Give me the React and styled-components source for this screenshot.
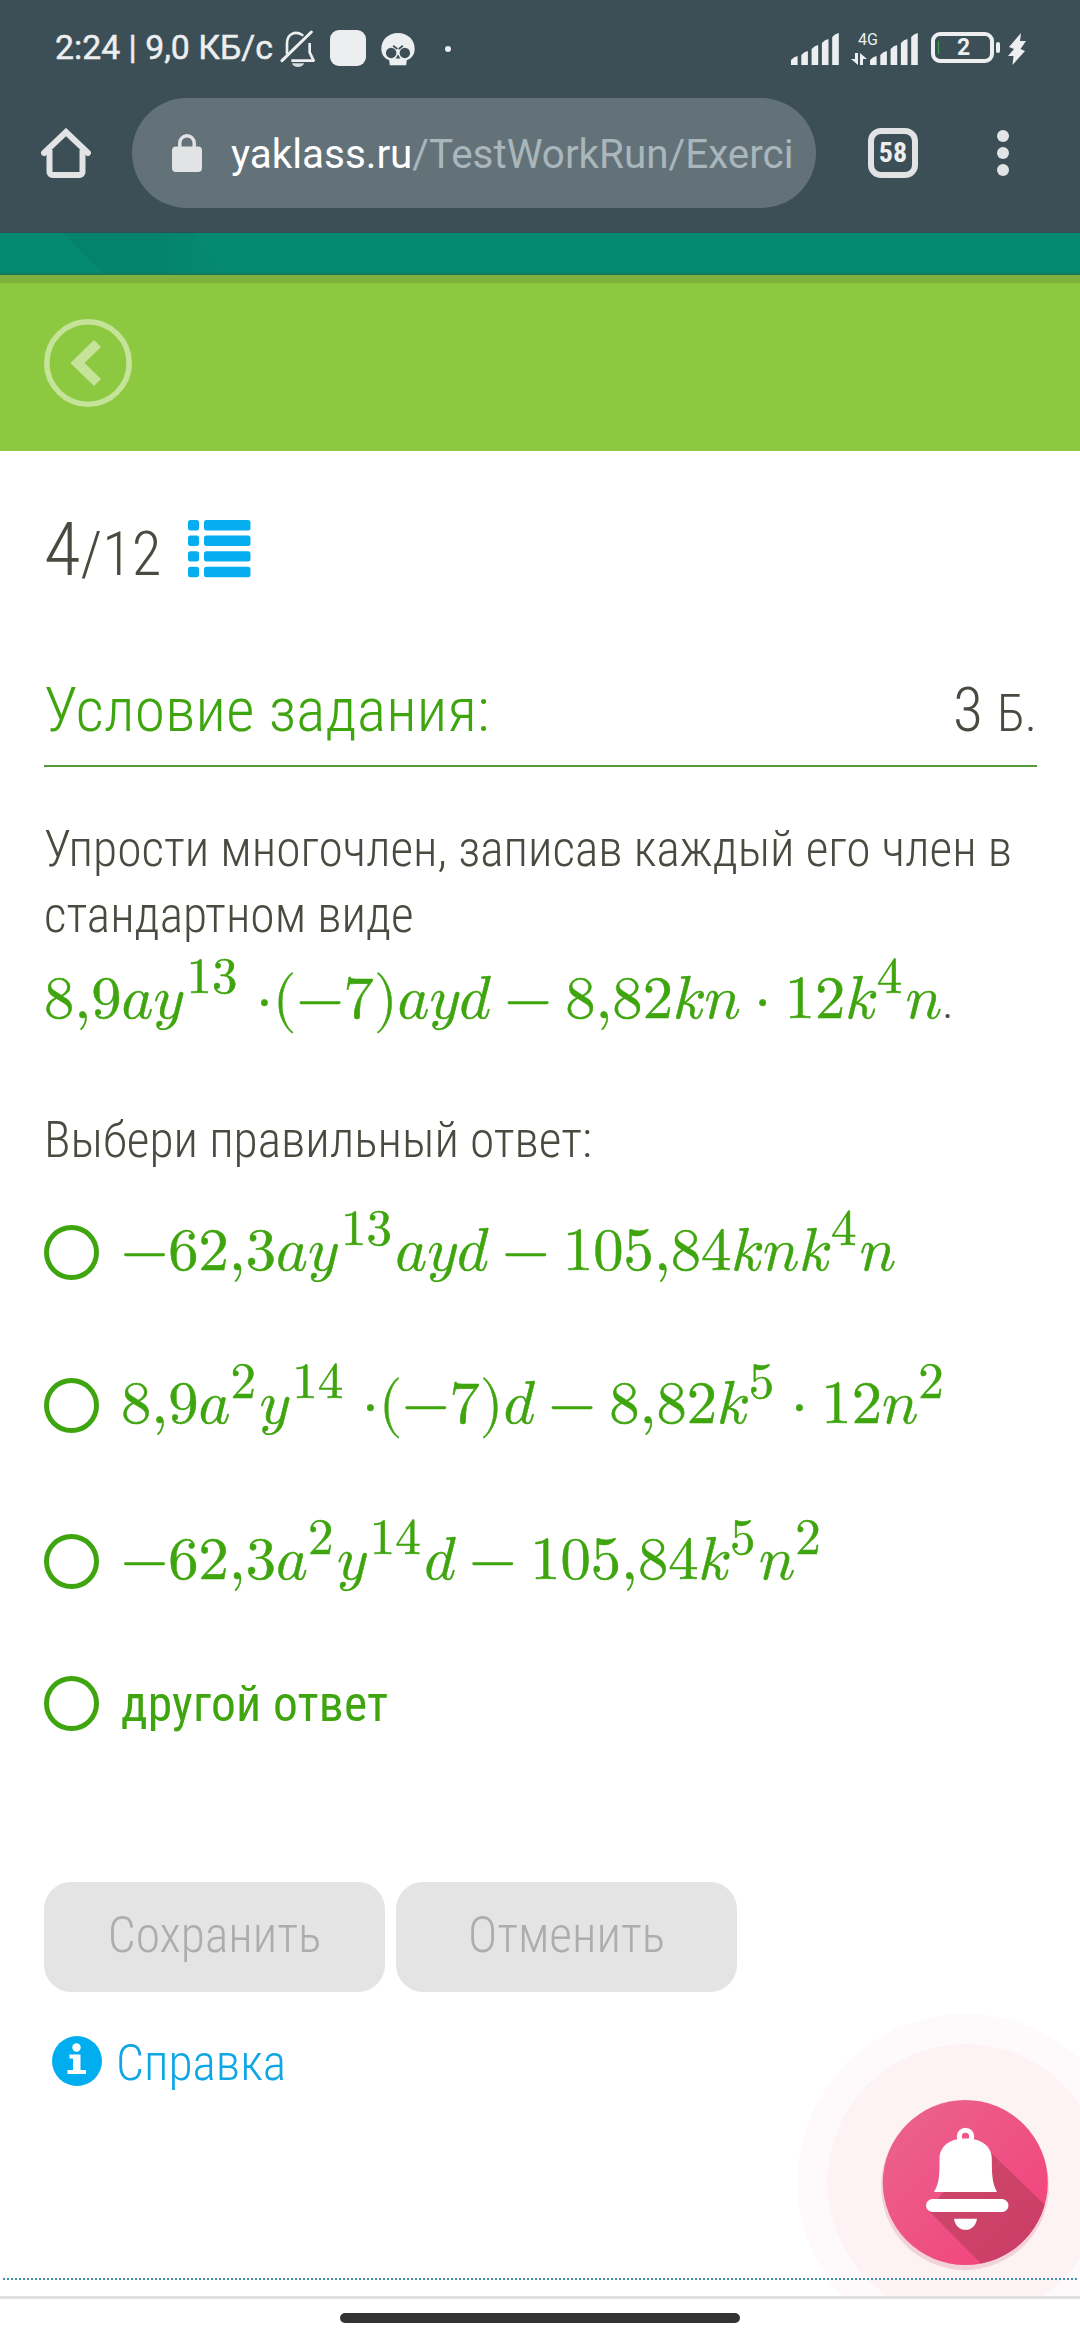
import React from "react";
import styled, { createGlobalStyle } from "styled-components";

const GlobalStyle = createGlobalStyle`
  * {
    box-sizing: border-box;
  }
  body {
    margin: 0;
    background: #fff;
    font-family: Roboto, "Open Sans", sans-serif;
  }
`;

const Screen = styled.div`
  display: flex;
  flex-direction: column;
  width: 1080px;
  height: 2340px;
  overflow: hidden;
  background: #fff;
`;

/* ---------- status bar ---------- */

const StatusBar = styled.div`
  display: flex;
  flex: none;
  align-items: center;
  justify-content: space-between;
  height: 97px;
  padding: 0 54px 0 55px;
  background: #3c4f56;
  color: #eceef0;
`;

const StatusGroup = styled.div`
  display: flex;
  align-items: center;
  svg {
    flex: none;
    display: block;
  }
`;

const Clock = styled.span`
  width: 225px;
  padding-bottom: 1px;
  font-size: 33.8px;
  line-height: 40px;
  white-space: nowrap;
  -webkit-text-stroke: 0.5px #eceef0;
`;

const AppSquare = styled.div`
  width: 36px;
  height: 36px;
  margin: -2px 15px 0 14px;
  border-radius: 9px;
  background: #eceef0;
`;

const Dot = styled.div`
  width: 6px;
  height: 6px;
  margin-left: 30px;
  border-radius: 50%;
  background: #eceef0;
`;

const MobileType = styled.div`
  display: flex;
  flex-direction: column;
  align-items: flex-end;
  width: 31px;
  height: 36px;
  span {
    width: 21px;
    margin-right: -9px;
    font-size: 16px;
    line-height: 18px;
  }
  svg {
    align-self: flex-start;
    margin: 4px 0 0 12px;
  }
`;

const Battery = styled.div`
  display: flex;
  align-items: center;
  width: 63px;
  height: 31px;
  margin: -2px 0 0 13px;
  padding-left: 3px;
  border: 4px solid #eceef0;
  border-radius: 9px;
  span {
    flex: 1;
    padding-right: 2px;
    font-size: 23px;
    font-weight: 700;
    line-height: 23px;
    text-align: center;
  }
`;

const Charge = styled.div`
  width: 1px;
  height: 13px;
  background: #3fa04e;
`;

const BatteryTip = styled.div`
  width: 4px;
  height: 11px;
  margin: -2px 8px 0 2px;
  border-radius: 2px;
  background: #eceef0;
`;

/* ---------- browser toolbar ---------- */

const Toolbar = styled.div`
  display: flex;
  flex: none;
  align-items: center;
  height: 136px;
  padding: 1px 71px 25px 41px;
  background: #3c4f56;
  border-bottom: 1px solid #2c4f55;
`;

const AddressBar = styled.div`
  display: flex;
  align-items: center;
  width: 684px;
  height: 110px;
  margin: 0 52px 0 41px;
  padding-left: 40px;
  border-radius: 55px;
  background: #637278;
`;

const Address = styled.div`
  margin-left: 29px;
  padding-top: 4px;
  font-size: 40.4px;
  line-height: 50px;
  white-space: nowrap;
  color: #a9b6bc;
  span {
    color: #fff;
  }
`;

const TabCount = styled.div`
  display: flex;
  align-items: center;
  justify-content: center;
  width: 50px;
  height: 50px;
  border: 6px solid #e1e3e4;
  border-radius: 13px;
  color: #eceef0;
  font-size: 28px;
  font-weight: 700;
  font-stretch: 75%;
`;

const Menu = styled.div`
  display: flex;
  flex-direction: column;
  gap: 5px;
  margin-left: 79px;
  i {
    width: 12px;
    height: 12px;
    border-radius: 50%;
    background: #e1e3e4;
  }
`;

/* ---------- page ---------- */

const Page = styled.div`
  position: relative;
  display: flex;
  flex-direction: column;
  flex: none;
  height: 2063px;
  overflow: hidden;
`;

const SiteStrip = styled.div`
  flex: none;
  height: 42px;
  background: #058a72;
  border-bottom: 2px solid #14785a;
`;

const StripShade = styled.div`
  width: 170px;
  height: 40px;
  margin-left: 62px;
  background: linear-gradient(90deg, #04826b 50%, #058a72);
  clip-path: polygon(0 0, 76% 0, 100% 100%, 24% 100%);
`;

const GreenHeader = styled.div`
  flex: none;
  height: 176px;
  padding: 36px 44px 0;
  background: #8cc840;
  border-top: 8px solid #80b13f;
  svg {
    display: block;
  }
`;

const Content = styled.div`
  display: flex;
  flex-direction: column;
  padding: 0 43px 0 44px;
  color: #4a4a40;
  font-size: 49.5px;
  font-weight: 300;
  font-stretch: 75%;
  line-height: 66px;
`;

const Counter = styled.div`
  display: flex;
  align-items: baseline;
  height: 100px;
  margin-top: 48px;
  font-size: 61px;
  line-height: 100px;
  big {
    font-size: 75px;
  }
  svg {
    align-self: flex-start;
    margin: 21px 0 0 26px;
  }
`;

const TaskHead = styled.div`
  display: flex;
  align-items: baseline;
  justify-content: space-between;
  height: 97px;
  margin-top: 71px;
  border-bottom: 2px solid #55993a;
  font-size: 61.6px;
  line-height: 80px;
  h2 {
    margin: 0;
    font-size: inherit;
    font-weight: inherit;
    letter-spacing: 0.2px;
    color: #3fa50f;
  }
  small {
    font-size: 51px;
  }
`;

const Text = styled.p`
  margin: ${(p) => p.$top}px 0 0;
`;

const Options = styled.div`
  margin-top: 27px;
`;

/* every formula line sits on a baseline 70px under its top edge */
const BaselineRow = styled.div`
  display: flex;
  align-items: baseline;
  height: ${(p) => p.$height}px;
  &::before {
    content: "";
    height: 70px;
  }
`;

const MathLine = styled("math")`
  font-family: "Latin Modern Math", math, "Liberation Serif", serif;
  font-size: 60.6px;
  font-weight: 400;
  font-stretch: 100%;
  line-height: 1;
  color: #3fa50f;
  -webkit-text-stroke: 0.5px #3fa50f;
`;

const Power = styled("mn")`
  font-size: 51px;
`;

const Radio = styled.div`
  align-self: flex-start;
  flex: none;
  width: 55px;
  height: 55px;
  margin: 25px 22px 0 0;
  border: 5.5px solid #3fa50f;
  border-radius: 50%;
`;

const OptionText = styled.span`
  color: #3fa50f;
  font-weight: 400;
  letter-spacing: 0.2px;
`;

const Buttons = styled.div`
  display: flex;
  gap: 11px;
`;

const Button = styled.button`
  width: 341px;
  height: 110px;
  padding: 0 0 4px;
  border: 0;
  border-radius: 27px;
  background: #e4e4e4;
  color: #adadad;
  font: inherit;
`;

const Help = styled.a`
  display: flex;
  margin-top: 38px;
  padding-left: 8px;
  color: #0fa6e4;
  svg {
    margin: 6px 14px 0 0;
  }
`;

const DottedLine = styled.div`
  position: relative;
  z-index: 1;
  flex: none;
  height: 2px;
  margin: auto 3px 16px;
  background: repeating-linear-gradient(90deg, #3d93a8 0 2px, transparent 2px 4px);
`;

const Fab = styled.svg`
  position: absolute;
  right: 0;
  bottom: 0;
`;

const NavBar = styled.div`
  display: flex;
  flex: 1;
  justify-content: center;
  padding-top: 14px;
  border-top: 3px solid #e0e0e0;
`;

const Handle = styled.div`
  width: 400px;
  height: 10px;
  border-radius: 5px;
  background: #333;
`;

/* ---------- icons ---------- */

const MutedBell = () => (
  <svg width="36" height="40" viewBox="32 24 108 120" fill="none" stroke="#eceef0" strokeWidth="8">
    <path d="M53 97V68C53 38 78 28 99 42" strokeLinecap="round" />
    <path d="M121 66V94L133 119H66" strokeLinejoin="round" />
    <path d="M38 119L126 33" strokeWidth="9" strokeLinecap="round" />
    <path d="M68 127H104C100 142 72 142 68 127Z" fill="#d5dadd" stroke="none" />
  </svg>
);

const Skull = () => (
  <svg width="34" height="34" viewBox="332 28 104 102">
    <path
      d="M384 30C414 30 435 51 435 78C435 98 424 108 411 113L409 129H359L357 113C344 108 333 98 333 78C333 51 354 30 384 30Z"
      fill="#eceef0"
    />
    <g fill="#3c4f56">
      <circle cx="363" cy="91" r="16" />
      <circle cx="405" cy="91" r="16" />
      <path d="M384 95L391 108H377Z" />
      <path d="M369 69L382 79M399 69L386 79" stroke="#3c4f56" strokeWidth="5" />
    </g>
  </svg>
);

const Signal = () => (
  <svg width="48" height="32" viewBox="0 0 48 32" fill="#eceef0">
    {[8, 13, 19, 25, 31].map((h, i) => (
      <path key={h} d={`M${i * 10.3} 32v${3 - h}q3 -3.5 6.6 -4v${h + 1}z`} />
    ))}
  </svg>
);

const HomeIcon = () => (
  <svg width="50" height="50" viewBox="0 0 50 50" fill="none" stroke="#e1e3e4" strokeWidth="6">
    <path d="M3 25L25 4L47 25" strokeLinecap="round" />
    <path d="M8.500 22V44a3 3 0 0 0 3 3H38.500a3 3 0 0 0 3-3V22" />
  </svg>
);

const Lock = () => (
  <svg width="30" height="38" viewBox="0 0 30 38">
    <rect y="12.500" width="30" height="25.500" rx="4" fill="#e1e3e4" />
    <path d="M7.800 14V9a7.200 7.200 0 0 1 14.400 0v5" fill="none" stroke="#e1e3e4" strokeWidth="3.400" />
  </svg>
);

const BackIcon = () => (
  <svg width="88" height="88" viewBox="0 0 88 88" fill="none" stroke="#c5e49a">
    <circle cx="44" cy="44" r="41.200" strokeWidth="5.600" />
    <path d="M53.500 24.500L33.500 44L53.500 63.500" strokeWidth="10" />
  </svg>
);

const ListIcon = () => (
  <svg width="63" height="58" viewBox="0 0 63 58" fill="#06aeef">
    {[0, 15.6, 31.2, 46.8].map((y) => (
      <g key={y}>
        <rect y={y} width="11" height="10.400" rx="2.500" />
        <rect x="16" y={y} width="46.500" height="10.400" rx="2.500" />
      </g>
    ))}
  </svg>
);

const InfoIcon = () => (
  <svg width="50" height="50" viewBox="0 0 50 50">
    <circle cx="25" cy="25" r="25" fill="#00aeef" />
    <circle cx="24.500" cy="11.500" r="4.200" fill="#fff" />
    <path d="M17.500 18.500H28.500V34H34V38H15.500V34H21V22.500H17.500Z" fill="#fff" />
  </svg>
);

const BellFab = () => (
  <Fab width="300" height="296" viewBox="0 0 300 296">
    <defs>
      <linearGradient id="disc" x1="0" y1="0" x2="1" y2="1">
        <stop offset="0" stopColor="#ea6590" />
        <stop offset="1" stopColor="#f3407a" />
      </linearGradient>
      <linearGradient id="shade" x1="0" y1="0" x2="1" y2="1">
        <stop offset="0" stopColor="#cd4a6b" />
        <stop offset="1" stopColor="#cb3763" />
      </linearGradient>
      <clipPath id="round">
        <circle cx="185.300" cy="182.500" r="82.500" />
      </clipPath>
    </defs>
    <circle cx="185.300" cy="182" r="168" fill="#fefafb" />
    <circle cx="185.300" cy="182" r="138" fill="#fdf3f4" />
    <circle cx="185" cy="186" r="84" fill="#f3d3da" />
    <circle cx="185.300" cy="182.500" r="82.500" fill="url(#disc)" />
    <path d="M205 147L300 239V300H237L149 211L160 196Z" fill="url(#shade)" clipPath="url(#round)" />
    <g fill="#fff">
      <circle cx="185.500" cy="136.500" r="6.200" fill="none" stroke="#fff" strokeWidth="5" />
      <path d="M154 192C160 182 159.500 172 159.500 158C160 146 170 138.500 185.500 138.500C201 138.500 211.500 146 211.800 158C212 172 211.500 182 217 192Z" />
      <rect x="146" y="199" width="82.500" height="13" rx="6.500" />
      <path d="M174 218.700H197C196 226 191 229.800 185.500 229.800C180 229.800 175 226 174 218.700Z" />
    </g>
  </Fab>
);

/* ---------- formulas ---------- */

// equal base heights keep all exponents of a line on one level
const Pow = ({ base, exp }) => (
  <msup>
    <mpadded height="0.667em" width={base === "y" ? "0.543em" : undefined}>
      <mi>{base}</mi>
    </mpadded>
    <Power>{exp}</Power>
  </msup>
);

const Minus = () => (
  <mo lspace="0.225em" rspace="0.225em">
    −
  </mo>
);

const Neg = () => (
  <mo form="prefix" lspace="0" rspace="0">
    −
  </mo>
);

const Times = ({ tight }) => (
  <mo lspace={tight ? "0.25em" : "0.222em"} rspace={tight ? "0" : "0.222em"}>
    ⋅
  </mo>
);

const Par = ({ children }) => (
  <mo stretchy="false" lspace="0" rspace="0">
    {children}
  </mo>
);

const Comma = () => (
  <mo lspace="0" rspace="0" separator="false">
    ,
  </mo>
);

const Num = ({ int, frac }) => (
  <>
    <mn>{int}</mn>
    <Comma />
    <mn>{frac}</mn>
  </>
);

const Vars = ({ children }) => [...children].map((c, i) => <mi key={i}>{c}</mi>);

const MinusSeven = () => (
  <>
    <Times tight />
    <Par>(</Par>
    <Neg />
    <mn>7</mn>
    <Par>)</Par>
  </>
);

const Option = ({ height, children }) => (
  <BaselineRow $height={height}>
    <Radio />
    {children}
  </BaselineRow>
);

const App = () => {
  return (
    <Screen>
      <GlobalStyle />
      <StatusBar>
        <StatusGroup>
          <Clock>2:24 | 9,0 КБ/с</Clock>
          <MutedBell />
          <AppSquare />
          <Skull />
          <Dot />
        </StatusGroup>
        <StatusGroup>
          <Signal />
          <MobileType>
            <span>4G</span>
            <svg width="16" height="12" viewBox="0 0 16 12" fill="#eceef0">
              <path d="M4 0h3v12L0 6h4zM9 12V0l7 6h-4v6z" />
            </svg>
          </MobileType>
          <Signal />
          <Battery>
            <Charge />
            <span>2</span>
          </Battery>
          <BatteryTip />
          <svg width="18" height="32" viewBox="0 0 18 32" fill="#eceef0">
            <path d="M13 0L1 14L6 16L0 23H5.500L4.500 32L17 18L12.500 16L18 8H12Z" />
          </svg>
        </StatusGroup>
      </StatusBar>

      <Toolbar>
        <HomeIcon />
        <AddressBar>
          <Lock />
          <Address>
            <span>yaklass.ru</span>/TestWorkRun/Exerci
          </Address>
        </AddressBar>
        <TabCount>58</TabCount>
        <Menu>
          <i />
          <i />
          <i />
        </Menu>
      </Toolbar>

      <Page>
        <SiteStrip>
          <StripShade />
        </SiteStrip>
        <GreenHeader>
          <BackIcon />
        </GreenHeader>

        <Content>
          <Counter>
            <big>4</big>/12
            <ListIcon />
          </Counter>

          <TaskHead>
            <h2>Условие задания:</h2>
            <span>
              3 <small>Б.</small>
            </span>
          </TaskHead>

          <Text $top={49}>Упрости многочлен, записав каждый его член в стандартном виде</Text>
          <BaselineRow $height={100}>
            <MathLine>
              <Num int="8" frac="9" />
              <mi>a</mi>
              <Pow base="y" exp="13" />
              <MinusSeven />
              <Vars>ayd</Vars>
              <Minus />
              <Num int="8" frac="82" />
              <Vars>kn</Vars>
              <Times />
              <mn>12</mn>
              <Pow base="k" exp="4" />
              <mi>n</mi>
            </MathLine>
            <span>.</span>
          </BaselineRow>

          <Text $top={59}>Выбери правильный ответ:</Text>

          <Options>
            <Option height={153}>
              <MathLine>
                <Neg />
                <Num int="62" frac="3" />
                <mi>a</mi>
                <Pow base="y" exp="13" />
                <Vars>ayd</Vars>
                <Minus />
                <Num int="105" frac="84" />
                <Vars>kn</Vars>
                <Pow base="k" exp="4" />
                <mi>n</mi>
              </MathLine>
            </Option>
            <Option height={156}>
              <MathLine>
                <Num int="8" frac="9" />
                <Pow base="a" exp="2" />
                <Pow base="y" exp="14" />
                <MinusSeven />
                <mi>d</mi>
                <Minus />
                <Num int="8" frac="82" />
                <Pow base="k" exp="5" />
                <Times />
                <mn>12</mn>
                <Pow base="n" exp="2" />
              </MathLine>
            </Option>
            <Option height={142}>
              <MathLine>
                <Neg />
                <Num int="62" frac="3" />
                <Pow base="a" exp="2" />
                <Pow base="y" exp="14" />
                <mi>d</mi>
                <Minus />
                <Num int="105" frac="84" />
                <Pow base="k" exp="5" />
                <Pow base="n" exp="2" />
              </MathLine>
            </Option>
            <Option height={231}>
              <OptionText>другой ответ</OptionText>
            </Option>
          </Options>

          <Buttons>
            <Button>Сохранить</Button>
            <Button>Отменить</Button>
          </Buttons>
          <Help>
            <InfoIcon />
            Справка
          </Help>
        </Content>

        <BellFab />
        <DottedLine />
      </Page>

      <NavBar>
        <Handle />
      </NavBar>
    </Screen>
  );
};

export default App;
